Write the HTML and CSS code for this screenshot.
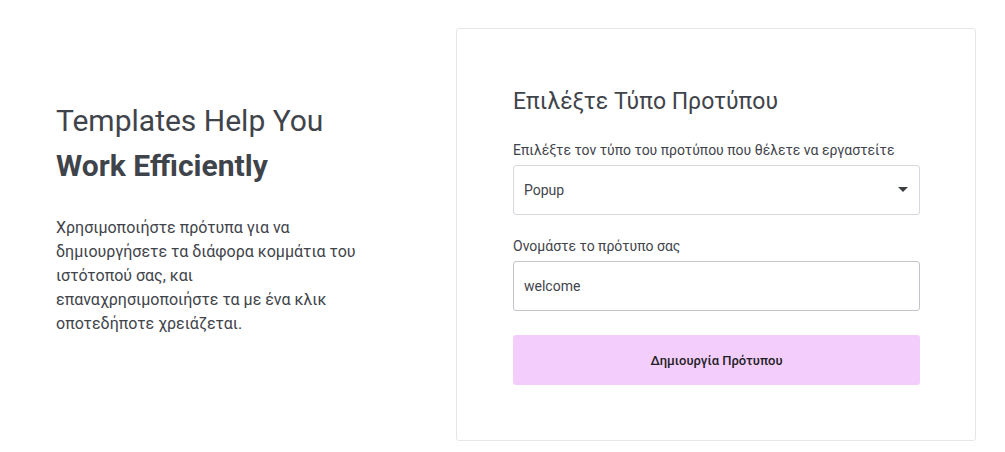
FILE: index.html
```html
<!DOCTYPE html>
<html lang="el">
<head>
<meta charset="utf-8">
<link rel="stylesheet" href="styles.css">
</head>
<body>
<div class="page">
  <div class="intro">
    <h2 class="intro-title">Templates Help You<br><strong>Work Efficiently</strong></h2>
    <p class="intro-text">Χρησιμοποιήστε πρότυπα για να δημιουργήσετε τα διάφορα κομμάτια του ιστότοπού σας, και επαναχρησιμοποιήστε τα με ένα κλικ οποτεδήποτε χρειάζεται.</p>
  </div>
  <div class="card">
    <h3 class="card-title">Επιλέξτε Τύπο Προτύπου</h3>
    <label class="field-label">Επιλέξτε τον τύπο του προτύπου που θέλετε να εργαστείτε</label>
    <div class="field select">
      <span>Popup</span>
      <svg class="caret" width="10" height="6" viewBox="0 0 10 6"><path d="M0 0h10L5 5z" fill="#3b3f44"/></svg>
    </div>
    <label class="field-label">Ονομάστε το πρότυπο σας</label>
    <div class="field input"><span>welcome</span></div>
    <button class="submit">Δημιουργία Πρότυπου</button>
  </div>
</div>
</body>
</html>
```
FILE: styles.css
```css
* { box-sizing: border-box; }
html, body { margin: 0; background: #fff; }
body { font-family: Roboto, "Noto Sans", Arial, sans-serif; color: #3f444b; }
.page {
  display: flex;
  align-items: flex-start;
  padding: 28px 0 0 56px;
}
.intro { width: 400px; padding-right: 90px; margin-top: 70px; }
.intro-title {
  margin: 0;
  font-size: 30px;
  font-weight: 400;
  line-height: 45px;
  color: #3f444b;
}
.intro-title strong { font-weight: 700; }
.intro-text {
  max-width: 303px;
  margin: 28px 0 0;
  font-size: 16px;
  line-height: 24px;
  color: #3f444b;
}
.card {
  width: 520px;
  height: 413px;
  border: 1px solid #e4e6e8;
  border-radius: 3px;
  padding: 58px 55px 0 56px;
}
.card-title {
  margin: 0 0 25px;
  font-size: 23px;
  font-weight: 400;
  line-height: 30px;
  color: #3f444b;
}
.field-label {
  display: block;
  font-size: 14px;
  line-height: 16px;
  color: #3f444b;
  margin-bottom: 7px;
}
.field {
  height: 50px;
  border-radius: 3px;
  display: flex;
  align-items: center;
  padding: 0 10px;
  font-size: 14px;
  color: #3f444b;
  margin-bottom: 23px;
}
.select { border: 1px solid #d5d8dc; justify-content: space-between; padding-right: 11px; }
.input { border: 1px solid #c2c5c9; margin-bottom: 24px; }
.caret { display: block; }
.submit {
  display: block;
  width: 100%;
  height: 50px;
  border: 0;
  border-radius: 3px;
  background: #f3cefd;
  font-family: Roboto, "Noto Sans", Arial, sans-serif;
  font-size: 13px;
  font-weight: 500;
  color: #1f2124;
}
```
